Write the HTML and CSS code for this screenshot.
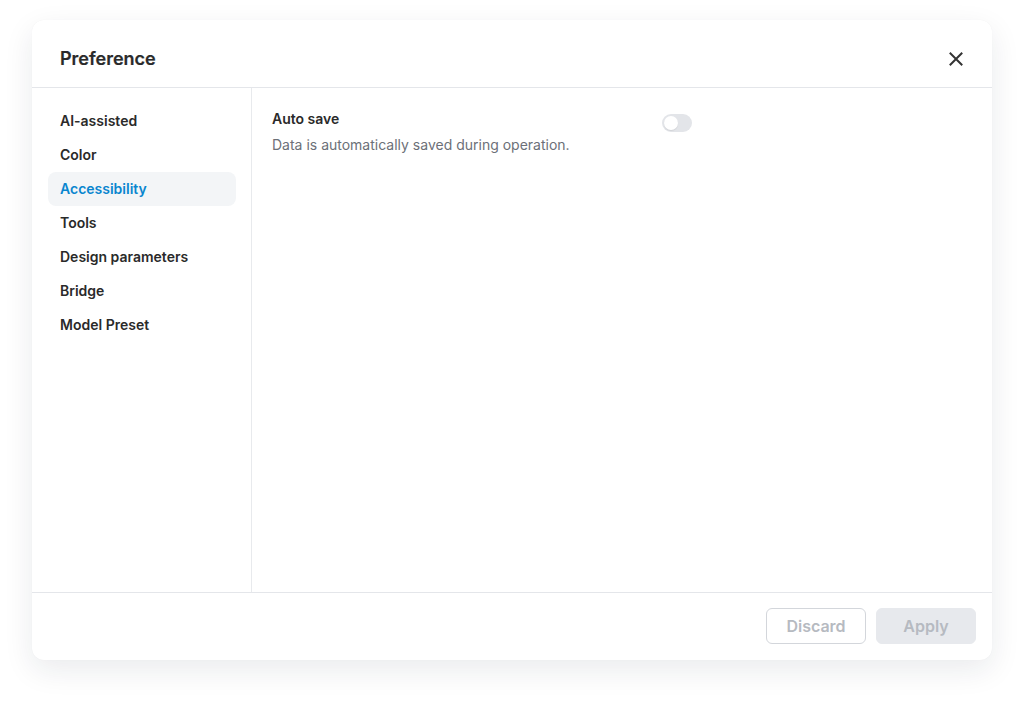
FILE: index.html
```html
<!DOCTYPE html>
<html lang="en">
<head>
<meta charset="utf-8">
<title>Preference</title>
<link rel="stylesheet" href="styles.css">
</head>
<body>
<div class="dialog">
  <header class="dialog-header">
    <h1 class="dialog-title">Preference</h1>
    <button class="close-btn" aria-label="Close">
      <svg width="24" height="24" viewBox="0 0 24 24"><path d="M6.5 6.5 L17.5 17.5 M17.5 6.5 L6.5 17.5" stroke="#333" stroke-width="2" stroke-linecap="square" fill="none"/></svg>
    </button>
  </header>
  <div class="dialog-body">
    <nav class="sidebar">
      <div class="nav-item">AI-assisted</div>
      <div class="nav-item">Color</div>
      <div class="nav-item active">Accessibility</div>
      <div class="nav-item">Tools</div>
      <div class="nav-item">Design parameters</div>
      <div class="nav-item">Bridge</div>
      <div class="nav-item">Model Preset</div>
    </nav>
    <main class="content">
      <div class="setting-row">
        <div class="setting-text">
          <div class="setting-label">Auto save</div>
          <div class="setting-desc">Data is automatically saved during operation.</div>
        </div>
        <div class="toggle"><span class="knob"></span></div>
      </div>
    </main>
  </div>
  <footer class="dialog-footer">
    <button class="btn btn-outline">Discard</button>
    <button class="btn btn-filled">Apply</button>
  </footer>
</div>
</body>
</html>
```

FILE: styles.css
```css
* { box-sizing: border-box; }
html, body { margin: 0; padding: 0; background: #ffffff; }
body {
  font-family: Inter, "Noto Sans", "Liberation Sans", sans-serif;
  color: #2e2e2e;
  padding: 20px 32px;
  min-height: 704px;
}
.dialog {
  width: 960px;
  height: 640px;
  background: #fff;
  border-radius: 12px;
  box-shadow: 0 10px 30px rgba(20, 30, 50, 0.09), 0 0 1px rgba(0,0,0,0.06);
  display: flex;
  flex-direction: column;
  overflow: hidden;
}
.dialog-header {
  display: flex;
  align-items: center;
  justify-content: space-between;
  padding: 25px 24px 14px 28px;
  border-bottom: 1px solid #e4e6ea;
}
.dialog-title {
  margin: 0;
  font-size: 18px;
  line-height: 28px;
  font-weight: 600;
  color: #2a2a2a;
  -webkit-text-stroke: 0.2px #2a2a2a;
}
.close-btn {
  border: 0;
  background: none;
  padding: 0;
  width: 24px;
  height: 24px;
  display: flex;
  cursor: pointer;
}
.dialog-body {
  height: 505px;
  flex: none;
  display: flex;
  border-bottom: 1px solid #e4e6ea;
}
.sidebar {
  width: 220px;
  flex: none;
  border-right: 1px solid #e8eaed;
  padding: 16px 15px 16px 16px;
  display: flex;
  flex-direction: column;
}
.nav-item {
  height: 34px;
  line-height: 34px;
  padding: 0 12px;
  border-radius: 8px;
  font-size: 14px;
  font-weight: 600;
  color: #2a2a2a;
}
.nav-item.active {
  background: #f3f5f7;
  color: #0a86cf;
}
.content {
  flex: 1;
  padding: 21px 20px;
}
.setting-row {
  width: 420px;
  display: flex;
  justify-content: space-between;
  align-items: flex-start;
}
.setting-label {
  font-size: 14px;
  line-height: 20px;
  font-weight: 600;
  color: #2a2a2a;
}
.setting-desc {
  margin-top: 6px;
  font-size: 14px;
  line-height: 20px;
  color: #6c7078;
}
.toggle {
  margin-top: 5px;
  width: 30px;
  height: 18px;
  border-radius: 9px;
  background: #e3e5e9;
  padding: 2px;
}
.knob {
  display: block;
  width: 14px;
  height: 14px;
  border-radius: 50%;
  background: #fff;
  box-shadow: 0 1px 1px rgba(0,0,0,0.08);
}
.dialog-footer {
  flex: 1;
  display: flex;
  justify-content: flex-end;
  align-items: flex-start;
  gap: 10px;
  padding: 15px 16px 16px;
}
.btn {
  width: 100px;
  height: 36px;
  border-radius: 6px;
  font-family: Inter, "Noto Sans", "Liberation Sans", sans-serif;
  font-size: 16px;
  font-weight: 600;
  color: #b6bac1;
  cursor: default;
}
.btn-outline {
  background: #fff;
  border: 1px solid #d3d6db;
}
.btn-filled {
  background: #e7e9ed;
  border: 1px solid #e7e9ed;
}
```
